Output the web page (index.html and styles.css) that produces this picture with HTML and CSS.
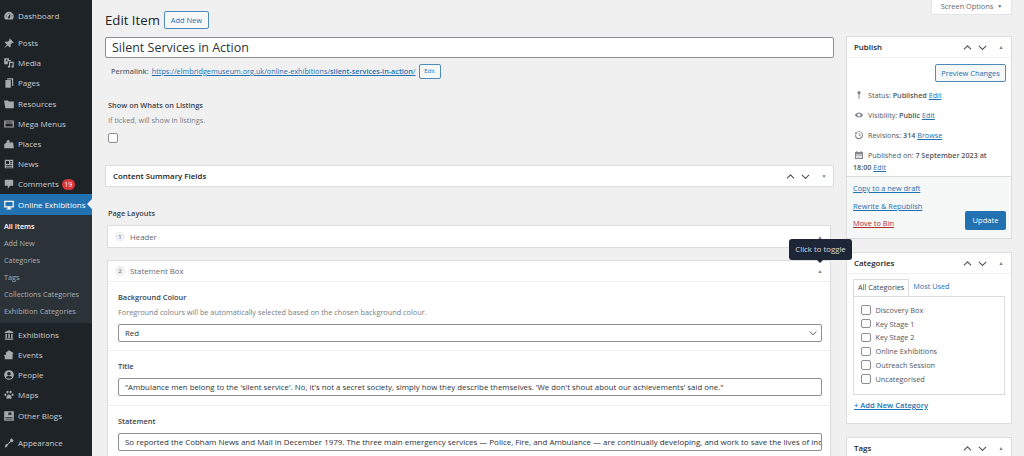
FILE: index.html
```html
<!DOCTYPE html>
<html lang="en">
<head>
  <meta charset="UTF-8">
  <title>Edit Item</title>
  <link rel="stylesheet" href="styles.css">
</head>
<body>
  <svg class="sprites" width="0" height="0">
    <symbol id="i-dash" viewBox="0 0 20 20"><path d="M10 3a8 8 0 0 0-8 8c0 2 .7 3.800 2 5h12a8 8 0 0 0 2-5 8 8 0 0 0-8-8zm0 2 1 1-1 1-1-1zM5 10l1-1 1 1-1 1zm5 4a1.800 1.800 0 0 1-.6-3.400L12 7l.6.300-1 4A1.800 1.800 0 0 1 10 14zm4-4 1-1 1 1-1 1z"/></symbol>
    <symbol id="i-pin" viewBox="0 0 20 20"><path d="M11 2l7 7-1.500 1-1-.5-3 3 .5 3.500-1.500 1.500-3.500-3.500L3 18l-.5-.5 4-5L3 9l1.500-1.500L8 8l3-3-.5-1z"/></symbol>
    <symbol id="i-media" viewBox="0 0 20 20"><path d="M2 2h8v3h3v2H8v5H2zm4 2a1.500 1.500 0 1 0 0 3 1.500 1.500 0 0 0 0-3zM10 8h8v8a2 2 0 1 1-2-2V10h-4v6a2 2 0 1 1-2-2z"/></symbol>
    <symbol id="i-pages" viewBox="0 0 20 20"><path d="M7 2h10v13h-2V4H7zM4 5h9v13H4z"/></symbol>
    <symbol id="i-folder" viewBox="0 0 20 20"><path d="M2 4h6l2 2h8v11H4L2 6z"/></symbol>
    <symbol id="i-menu" viewBox="0 0 20 20"><path d="M2 4h16v12H2zm2 2v1.500h12V6zm0 3v5h12V9z"/></symbol>
    <symbol id="i-places" viewBox="0 0 20 20"><path d="M2 10l4-2v-3l3-2 2 2v3l3-1 3 1 1 9H2z"/></symbol>
    <symbol id="i-news" viewBox="0 0 20 20"><path d="M3 3h14v14H3zm2 2v5h5V5zm7 0v1.500h3V5zm0 3v1.500h3V8zM5 12v1.500h10V12zm0 2.500V16h10v-1.500z"/></symbol>
    <symbol id="i-comment" viewBox="0 0 20 20"><path d="M4 3h12a1 1 0 0 1 1 1v8a1 1 0 0 1-1 1h-4l-4 5v-5H4a1 1 0 0 1-1-1V4a1 1 0 0 1 1-1z"/></symbol>
    <symbol id="i-screen" viewBox="0 0 20 20"><path d="M2 3h16v11h-6v2h2v1.500H6V16h2v-2H2zm2 2v7h12V5z"/></symbol>
    <symbol id="i-bank" viewBox="0 0 20 20"><path d="M10 2l7 3v1.500H3V5zM4 8h2.500v7H4zm4.700 0h2.600v7H8.700zm4.800 0H16v7h-2.500zM3 16h14v2H3z"/></symbol>
    <symbol id="i-events" viewBox="0 0 20 20"><path d="M10 2l8 5-2 1v9H3v-5L1 11l4-2V6z"/></symbol>
    <symbol id="i-people" viewBox="0 0 20 20"><path d="M10 2a8 8 0 1 0 0 16 8 8 0 0 0 0-16zm0 3a3 3 0 1 1 0 6 3 3 0 0 1 0-6zm-5 9c.6-2 2.600-2.500 5-2.500s4.400.5 5 2.500c-1.200 1.300-3 2-5 2s-3.800-.7-5-2z"/></symbol>
    <symbol id="i-paw" viewBox="0 0 20 20"><path d="M7.500 3a1.800 2.200 0 1 1 0 4.400 1.800 2.200 0 0 1 0-4.400zm5 0a1.800 2.200 0 1 1 0 4.400 1.800 2.200 0 0 1 0-4.400zM4 7.500A1.700 2 0 1 1 4 11.500a1.700 2 0 0 1 0-4zm12 0a1.700 2 0 1 1 0 4 1.700 2 0 0 1 0-4zM10 9c2 0 4.500 3 4.500 5.500 0 2-2.500 2-4.500 1.500-2 .5-4.500.5-4.500-1.500C5.500 12 8 9 10 9z"/></symbol>
    <symbol id="i-blogs" viewBox="0 0 20 20"><path d="M2 2h16v16H2zm7 2v5l2.500-1.500L14 9V4zM4 12v1.500h12V12zm0 2.500V16h12v-1.500z"/></symbol>
    <symbol id="i-brush" viewBox="0 0 20 20"><path d="M14 2l4 4-3 3-2-.5-5 4.500c.3 2-1.500 4.500-5.500 4.500 1.500-1.500 1-3.500 2-5 1-1.200 2.500-1.300 3-1l4.500-5L12 4z"/></symbol>
    <symbol id="i-up" viewBox="0 0 20 20"><path d="M3.500 13.500L10 7l6.500 6.500" fill="none" stroke="currentColor" stroke-width="2"/></symbol>
    <symbol id="i-down" viewBox="0 0 20 20"><path d="M3.500 7L10 13.500 16.500 7" fill="none" stroke="currentColor" stroke-width="2"/></symbol>
  </svg>

  <nav class="sidebar">
    <ul class="menu">
      <li class="menu-item"><svg class="menu-icon"><use href="#i-dash"/></svg>Dashboard</li>
      <li class="menu-item menu-gap"><svg class="menu-icon"><use href="#i-pin"/></svg>Posts</li>
      <li class="menu-item"><svg class="menu-icon"><use href="#i-media"/></svg>Media</li>
      <li class="menu-item"><svg class="menu-icon"><use href="#i-pages"/></svg>Pages</li>
      <li class="menu-item"><svg class="menu-icon"><use href="#i-folder"/></svg>Resources</li>
      <li class="menu-item"><svg class="menu-icon"><use href="#i-menu"/></svg>Mega Menus</li>
      <li class="menu-item"><svg class="menu-icon"><use href="#i-places"/></svg>Places</li>
      <li class="menu-item"><svg class="menu-icon"><use href="#i-news"/></svg>News</li>
      <li class="menu-item"><svg class="menu-icon"><use href="#i-comment"/></svg>Comments <span class="count">19</span></li>
      <li class="menu-item current"><svg class="menu-icon"><use href="#i-screen"/></svg>Online Exhibitions</li>
    </ul>
    <ul class="submenu">
      <li class="active">All Items</li>
      <li>Add New</li>
      <li>Categories</li>
      <li>Tags</li>
      <li>Collections Categories</li>
      <li>Exhibition Categories</li>
    </ul>
    <ul class="menu">
      <li class="menu-item"><svg class="menu-icon"><use href="#i-bank"/></svg>Exhibitions</li>
      <li class="menu-item"><svg class="menu-icon"><use href="#i-events"/></svg>Events</li>
      <li class="menu-item"><svg class="menu-icon"><use href="#i-people"/></svg>People</li>
      <li class="menu-item"><svg class="menu-icon"><use href="#i-paw"/></svg>Maps</li>
      <li class="menu-item"><svg class="menu-icon"><use href="#i-blogs"/></svg>Other Blogs</li>
      <li class="menu-item menu-gap"><svg class="menu-icon"><use href="#i-brush"/></svg>Appearance</li>
    </ul>
  </nav>

  <main class="content">
    <div class="screen-row"><div class="screen-options">Screen Options <span class="caret">▼</span></div></div>
    <div class="columns">
      <div class="col-main">
        <div class="page-head">
          <h1>Edit Item</h1>
          <a class="btn-outline add-new">Add New</a>
        </div>
        <div class="title-input">Silent Services in Action</div>
        <div class="permalink">
          <b>Permalink:</b>
          <a href="#">https://elmbridgemuseum.org.uk/online-exhibitions/<b>silent-services-in-action</b>/</a>
          <span class="btn-outline btn-mini">Edit</span>
        </div>

        <div class="listing-field">
          <div class="field-label">Show on Whats on Listings</div>
          <div class="field-help">If ticked, will show in listings.</div>
          <span class="checkbox"></span>
        </div>

        <section class="postbox summary-box">
          <h2>Content Summary Fields</h2>
          <div class="box-controls">
            <svg class="ctl"><use href="#i-up"/></svg><svg class="ctl"><use href="#i-down"/></svg><span class="tri">▼</span>
          </div>
        </section>

        <div class="field-label layouts-label">Page Layouts</div>

        <section class="layout">
          <div class="layout-head"><span class="num">1</span>Header<span class="tri layout-tri">▲</span></div>
        </section>

        <section class="layout layout-open">
          <div class="layout-head head-line"><span class="num">2</span>Statement Box<span class="tri layout-tri">▲</span></div>
          <div class="sub-field sub-first">
            <div class="field-label">Background Colour</div>
            <div class="field-help">Foreground colours will be automatically selected based on the chosen background colour.</div>
            <div class="text-input select-input">Red<svg class="select-arrow"><use href="#i-down"/></svg></div>
          </div>
          <div class="sub-field">
            <div class="field-label">Title</div>
            <div class="text-input">"Ambulance men belong to the 'silent service'. No, it's not a secret society, simply how they describe themselves. 'We don't shout about our achievements' said one."</div>
          </div>
          <div class="sub-field">
            <div class="field-label">Statement</div>
            <div class="text-input statement-input">So reported the Cobham News and Mail in December 1979. The three main emergency services — Police, Fire, and Ambulance — are continually developing, and work to save the lives of ind</div>
          </div>
        </section>
      </div>

      <aside class="col-side">
        <section class="postbox side-box publish">
          <div class="side-head"><h2>Publish</h2><div class="box-controls"><svg class="ctl"><use href="#i-up"/></svg><svg class="ctl"><use href="#i-down"/></svg><span class="tri">▲</span></div></div>
          <div class="publish-body">
            <div class="preview-row"><a class="btn-outline preview">Preview Changes</a></div>
            <div class="pub-row"><svg class="pub-icon" viewBox="0 0 20 20"><path d="M10 2a3.500 3.500 0 0 1 1 6.800V18H9V8.800A3.500 3.500 0 0 1 10 2z"/></svg>Status: <b>Published</b> <a href="#">Edit</a></div>
            <div class="pub-row"><svg class="pub-icon" viewBox="0 0 20 20"><path d="M10 5c4 0 7 3 8.500 5-1.500 2-4.500 5-8.500 5s-7-3-8.500-5C3 8 6 5 10 5zm0 2a3 3 0 1 0 0 6 3 3 0 0 0 0-6z"/></svg>Visibility: <b>Public</b> <a href="#">Edit</a></div>
            <div class="pub-row"><svg class="pub-icon" viewBox="0 0 20 20"><path d="M3.500 6A8 8 0 1 1 2 10h2a6 6 0 1 0 1-3.300L7 8.500H2V3.500zM9.500 6h1.500v4l3 1.500-.7 1.300-3.800-2z"/></svg>Revisions: <b>314</b> <a href="#">Browse</a></div>
            <div class="pub-row"><svg class="pub-icon" viewBox="0 0 20 20"><path d="M2 4h3V2h2v2h6V2h2v2h3v14H2zm2 5v7h12V9zm1 1h2v2H5zm4 0h2v2H9zm4 0h2v2h-2zm-8 3h2v2H5zm4 0h2v2H9zm4 0h2v2h-2z"/></svg>Published on: <b>7 September 2023 at</b><br><b>18:00</b> <a href="#">Edit</a></div>
          </div>
          <div class="publish-foot">
            <div class="foot-links">
              <a href="#">Copy to a new draft</a>
              <a href="#">Rewrite &amp; Republish</a>
              <a href="#" class="trash">Move to Bin</a>
            </div>
            <span class="btn-primary">Update</span>
          </div>
        </section>

        <section class="postbox side-box categories">
          <div class="side-head"><h2>Categories</h2><div class="box-controls"><svg class="ctl"><use href="#i-up"/></svg><svg class="ctl"><use href="#i-down"/></svg><span class="tri">▲</span></div></div>
          <div class="cat-body">
            <div class="cat-tabs"><span class="cat-tab on">All Categories</span><a class="cat-tab">Most Used</a></div>
            <ul class="cat-list">
              <li><span class="checkbox"></span>Discovery Box</li>
              <li><span class="checkbox"></span>Key Stage 1</li>
              <li><span class="checkbox"></span>Key Stage 2</li>
              <li><span class="checkbox"></span>Online Exhibitions</li>
              <li><span class="checkbox"></span>Outreach Session</li>
              <li><span class="checkbox"></span>Uncategorised</li>
            </ul>
            <a href="#" class="add-cat">+ Add New Category</a>
          </div>
        </section>

        <section class="postbox side-box">
          <div class="side-head"><h2>Tags</h2><div class="box-controls"><svg class="ctl"><use href="#i-up"/></svg><svg class="ctl"><use href="#i-down"/></svg><span class="tri">▲</span></div></div>
        </section>
      </aside>
    </div>
  </main>

  <div class="tooltip">Click to toggle</div>
</body>
</html>
```

FILE: styles.css
```css
* {
  box-sizing: border-box;
}
html, body {
  height: 456px;
  overflow: hidden;
}
body {
  margin: 0;
  display: flex;
  background: #f0f0f1;
  color: #50575e;
  font-family: "Open Sans", "Noto Sans", sans-serif;
  font-size: 8px;
  line-height: 12px;
}
a {
  color: #2271b1;
}
b {
  font-weight: 600;
}
ul {
  list-style: none;
  margin: 0;
  padding: 0;
}
h1, h2 {
  margin: 0;
  font-weight: 400;
}
.sprites {
  position: absolute;
}

/* sidebar */
.sidebar {
  width: 92px;
  flex: none;
  height: 456px;
  padding-top: 6px;
  background: #1d2327;
  color: #c8cbce;
}
.menu-item {
  display: flex;
  align-items: center;
  height: 20.2px;
  padding-left: 3px;
  font-size: 8px;
  white-space: nowrap;
}
.menu-gap {
  margin-top: 6.800px;
}
.menu-icon {
  width: 12px;
  height: 12px;
  margin-right: 3px;
  flex: none;
  fill: #a7aaad;
}
.count {
  display: inline-block;
  width: 13px;
  height: 11px;
  margin-left: 3px;
  border-radius: 6px;
  background: #d63638;
  color: #fff;
  font-size: 7px;
  line-height: 11px;
  text-align: center;
}
.current {
  position: relative;
  background: #2271b1;
  color: #fff;
}
.current .menu-icon {
  fill: #fff;
}
.current::after {
  content: "";
  position: absolute;
  right: 0;
  top: 5px;
  border: 5px solid transparent;
  border-right-color: #f0f0f1;
  border-left: 0;
}
.submenu {
  height: 108px;
  padding: 3px 0 0 4px;
  background: #2c3338;
  color: #a9aeb3;
  font-size: 7.300px;
}
.submenu li {
  height: 17px;
  line-height: 16px;
  white-space: nowrap;
}
.submenu .active {
  color: #fff;
  font-weight: 600;
}
.submenu + .menu {
  margin-top: 2px;
}

/* main */
.content {
  flex: 1;
  height: 456px;
  overflow: hidden;
  padding: 0 12px 0 13px;
  min-width: 0;
}
.screen-row {
  display: flex;
  justify-content: flex-end;
}
.screen-options {
  width: 81px;
  height: 16px;
  margin-top: -1px;
  background: #fff;
  border: 1px solid #e4e4e6;
  border-top: 0;
  color: #646970;
  font-size: 7.400px;
  line-height: 15px;
  text-align: center;
}
.caret {
  font-size: 5px;
  margin-left: 2px;
  vertical-align: 1px;
}
.columns {
  display: flex;
  gap: 12px;
  align-items: flex-start;
}
.col-main {
  width: 729px;
  flex: none;
  margin-top: -4px;
}
.col-side {
  width: 166px;
  flex: none;
  margin-top: 21px;
}
.page-head {
  display: flex;
  align-items: center;
  height: 18px;
  margin-bottom: 8px;
}
h1 {
  font-size: 13.200px;
  color: #1d2327;
}
.btn-outline {
  display: inline-block;
  border: 1px solid #4f8ab8;
  border-radius: 2px;
  background: #f6f7f7;
  color: #2271b1;
  text-align: center;
}
.add-new {
  width: 45px;
  height: 18px;
  margin-left: 4px;
  font-size: 7.400px;
  line-height: 16px;
}
.title-input {
  height: 21px;
  padding-left: 6px;
  background: #fff;
  border: 1px solid #8c8f94;
  border-radius: 2px;
  color: #2c3338;
  font-size: 12.500px;
  line-height: 20px;
}
.permalink {
  display: flex;
  align-items: center;
  height: 16px;
  margin-top: 5px;
  padding-left: 6px;
  font-size: 7.280px;
  white-space: pre-wrap;
  color: #646970;
}
.permalink a {
  margin-left: 3px;
}
.btn-mini {
  width: 22px;
  height: 15px;
  margin-left: 3px;
  font-size: 6px;
  line-height: 13px;
}
.listing-field {
  height: 86px;
  padding: 20px 0 0 3px;
}
.field-label {
  color: #3c434a;
  font-size: 7.400px;
  font-weight: 600;
  line-height: 12px;
}
.field-help {
  margin-top: 3px;
  color: #787c82;
  font-size: 7.300px;
  line-height: 12px;
}
.checkbox {
  display: inline-block;
  width: 9.500px;
  height: 9.500px;
  flex: none;
  background: #fff;
  border: 1px solid #8c8f94;
  border-radius: 2px;
}
.listing-field .checkbox {
  margin-top: 7px;
}
.postbox {
  background: #fff;
  border: 1px solid #dcdcde;
}
.summary-box {
  display: flex;
  align-items: center;
  justify-content: space-between;
  height: 22px;
  padding: 0 3px 0 7px;
}
h2 {
  color: #1d2327;
  font-size: 7.900px;
  font-weight: 600;
}
.box-controls {
  display: flex;
  align-items: center;
  color: #50575e;
}
.ctl {
  width: 11px;
  height: 11px;
  margin-right: 4px;
}
.tri {
  width: 12px;
  margin-left: 3px;
  color: #787c82;
  font-size: 5px;
  line-height: 12px;
  text-align: center;
}
.layouts-label {
  margin: 20px 0 6px 3px;
}
.layout {
  width: 724px;
  margin-left: 2px;
  margin-bottom: 12px;
  background: #fff;
  border: 1px solid #dcdcde;
}
.layout-head {
  position: relative;
  display: flex;
  align-items: center;
  height: 21px;
  padding-left: 7px;
  color: #646970;
  font-size: 7.800px;
}
.head-line {
  border-bottom: 1px solid #f0f0f1;
}
.num {
  width: 10px;
  height: 10px;
  margin-right: 5px;
  border-radius: 50%;
  background: #f0f0f1;
  font-size: 6px;
  line-height: 10px;
  text-align: center;
}
.layout-tri {
  margin-left: auto;
  margin-right: 4px;
}
.layout-open {
  height: 200px;
  margin-bottom: 0;
}
.sub-field {
  height: 54.500px;
  padding: 9px 8px 0 10px;
  border-bottom: 1px solid #f0f0f1;
}
.sub-first {
  height: 69px;
}
.text-input {
  height: 18px;
  margin-top: 6px;
  padding-left: 6px;
  background: #fff;
  border: 1px solid #8c8f94;
  border-radius: 2px;
  color: #2c3338;
  font-size: 7.830px;
  line-height: 16px;
  white-space: nowrap;
  overflow: hidden;
}
.statement-input {
  font-size: 7.950px;
}
.select-input {
  display: flex;
  align-items: center;
  justify-content: space-between;
}
.select-arrow {
  width: 10px;
  height: 10px;
  margin-right: 3px;
  color: #50575e;
}

/* side boxes */
.side-box {
  margin-bottom: 13px;
}
.side-head {
  display: flex;
  align-items: center;
  justify-content: space-between;
  height: 21px;
  padding: 0 4px 0 7px;
  border-bottom: 1px solid #f0f0f1;
}
.publish {
  height: 203px;
}
.publish-body {
  height: 118px;
  padding: 6px 5px 0 6px;
  font-size: 7.200px;
}
.preview-row {
  display: flex;
  justify-content: flex-end;
}
.preview {
  width: 71px;
  height: 18px;
  font-size: 7.400px;
  line-height: 16px;
}
.pub-row {
  height: 20px;
  padding-top: 4px;
  white-space: nowrap;
}
.preview-row + .pub-row {
  margin-top: 3px;
}
.pub-icon {
  width: 10px;
  height: 10px;
  margin: 0 4px 0 1px;
  fill: #82878c;
  vertical-align: -2px;
}
.publish-foot {
  display: flex;
  justify-content: space-between;
  align-items: flex-end;
  height: 62px;
  padding: 0 5px 8px 6px;
  background: #f6f7f7;
  border-top: 1px solid #dcdcde;
}
.foot-links {
  display: flex;
  flex-direction: column;
  gap: 5.500px;
  margin-bottom: 1px;
  font-size: 7.400px;
}
.trash {
  color: #b32d2e;
}
.btn-primary {
  width: 41px;
  height: 19px;
  background: #2271b1;
  border-radius: 2px;
  color: #fff;
  font-size: 7.600px;
  line-height: 19px;
  text-align: center;
}
.categories {
  height: 172px;
}
.cat-body {
  padding: 5px 6px 0;
}
.cat-tabs {
  display: flex;
  height: 17px;
  font-size: 7.300px;
  line-height: 15px;
}
.cat-tab {
  padding: 0 4px;
  color: #2271b1;
}
.cat-tab.on {
  margin-bottom: -1px;
  height: 17px;
  background: #fff;
  border: 1px solid #dcdcde;
  border-bottom: 0;
  color: #3c434a;
}
.cat-list {
  height: 99px;
  padding: 6px 7px 0;
  border: 1px solid #dcdcde;
  color: #50575e;
  font-size: 7.300px;
}
.cat-list li {
  display: flex;
  align-items: center;
  gap: 5px;
  height: 13.800px;
}
.add-cat {
  display: block;
  margin-top: 4px;
  padding-left: 1px;
  font-size: 7.600px;
  font-weight: 600;
}

/* tooltip over the postbox toggle */
.tooltip {
  position: absolute;
  left: 789px;
  top: 239px;
  width: 63px;
  height: 21px;
  background: #1c2636;
  border-radius: 3px;
  color: #dcdcde;
  font-size: 7.800px;
  line-height: 21px;
  text-align: center;
}
.tooltip::after {
  content: "";
  position: absolute;
  left: 28px;
  top: 21px;
  border: 3px solid transparent;
  border-top-color: #1c2636;
  border-bottom: 0;
}
```
